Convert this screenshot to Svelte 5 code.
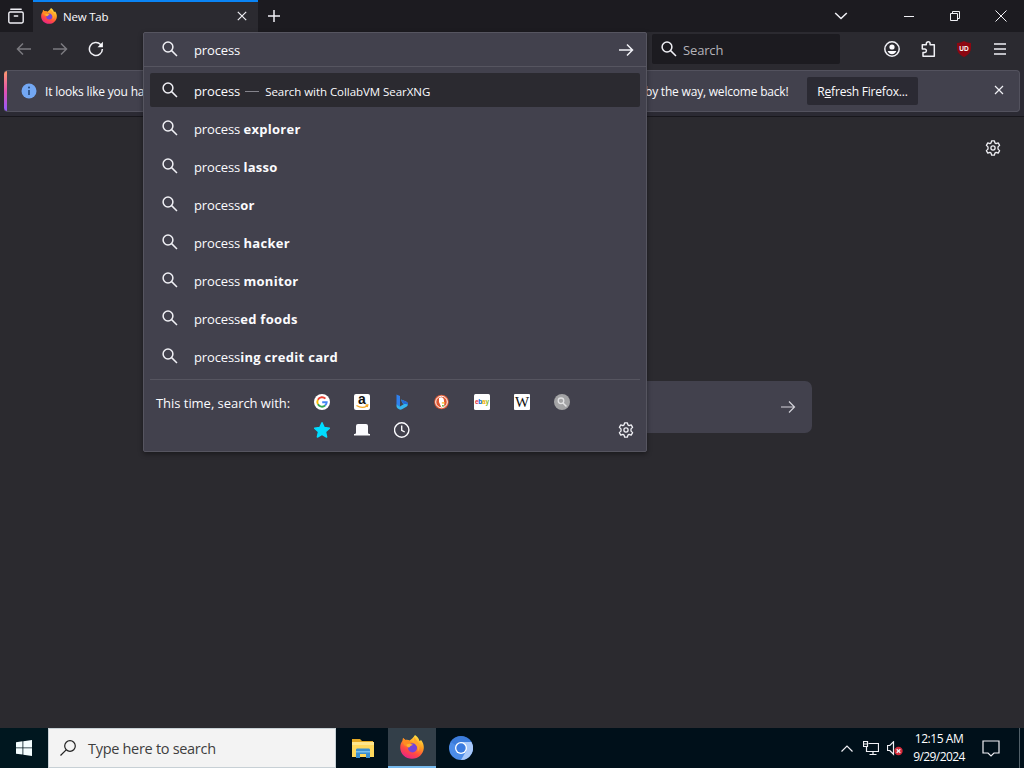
<script>
  const suggestions = [
    ['process ', 'explorer'],
    ['process ', 'lasso'],
    ['process', 'or'],
    ['process ', 'hacker'],
    ['process ', 'monitor'],
    ['process', 'ed foods'],
    ['process', 'ing credit card']
  ];
</script>

{#snippet lens()}
  <svg class="i16" viewBox="0 0 16 16"><circle cx="6" cy="6" r="4.9" /><path d="M9.6 9.6 15 15" /></svg>
{/snippet}

{#snippet gear()}
  <svg class="i16" viewBox="0 0 16 16">
    <path stroke-linejoin="round" stroke-width="1.3" d="M6.6 .8h2.8l.5 2.1 1.2.7 2.1-.7 1.4 2.5-1.6 1.5v2.2l1.6 1.5-1.4 2.5-2.1-.7-1.2.7-.5 2.1H6.6l-.5-2.1-1.2-.7-2.1.7-1.4-2.5L3 9.1V6.900L1.400 5.400 2.800 2.900l2.100.7 1.200-.7z" />
    <circle cx="8" cy="8" r="2.100" stroke-width="1.300" />
  </svg>
{/snippet}

{#snippet arrow()}
  <svg class="i16" viewBox="0 0 16 16"><path d="M1 8h13.500M9 2.500 14.500 8 9 13.500" /></svg>
{/snippet}

{#snippet firefox()}
  <svg class="fox" viewBox="0 0 24 24">
    <defs>
      <linearGradient id="fx" x1=".8" y1="0" x2=".3" y2="1">
        <stop offset="0" stop-color="#fff04a" /><stop offset=".4" stop-color="#ff9a1f" />
        <stop offset=".7" stop-color="#ff4a43" /><stop offset="1" stop-color="#e8208a" />
      </linearGradient>
    </defs>
    <path fill="url(#fx)" d="M15 0c3 2 4 4 4.500 6 1-.2 1.300-.8 1.400-1.300C23 7.500 24 10 23.800 13 23.400 19 18.500 23.800 12 23.800S.2 19 .2 12.500C.2 9 1.500 7 2.700 5.500L3 3l2.500 2c1.500-.3 3-.1 4 .5 2-1 4-3 5.500-5.500z" />
    <path fill="#ff8b22" d="M2.700 5.500 3 3l2.500 2c2 0 3.500.5 4.500 1.700l3 1-3 2-2 2c-3 0-5-2-5.300-6.200z" />
    <circle cx="12.500" cy="12.800" r="4.600" fill="#7543d8" />
    <path fill="#ffb22c" d="M6.500 9.500c3-1.500 5-.8 6.500.6-1.500.2-2.500.9-3.500 2.200-1.500.4-3-.8-3-2.800z" />
    <path fill="#ffa32b" d="M14.500 2c1.500 4 5 5 5 10 0 2-.7 3.500-1.800 4.600.6-3-.2-5.100-1.700-6.600-2-2-3-4-1.500-8z" />
  </svg>
{/snippet}

<div class="screen">
  <header class="tabs">
    <div class="view">
      <svg class="i16" viewBox="0 0 16 16"><path stroke-linecap="round" stroke-width="1.400" d="M2.800 1.200h10.400M2.200 4h11.600c.8 0 1.400.6 1.400 1.400v8.200c0 .8-.6 1.400-1.400 1.400H2.200c-.8 0-1.400-.6-1.400-1.400V5.400C.8 4.600 1.400 4 2.200 4zM6.300 8h3.400" /></svg>
    </div>
    <div class="tab">
      {@render firefox()}
      <span class="title">New Tab</span>
      <svg class="x" viewBox="0 0 10 10"><path d="m.8.8 8.400 8.400m0-8.400L.8 9.200" /></svg>
    </div>
    <svg class="plus" viewBox="0 0 12 12"><path d="M6 0v12M0 6h12" /></svg>
    <svg class="chev" viewBox="0 0 14 8"><path d="m1.200 1 5.800 5.500L12.800 1" /></svg>
    <svg class="wmin" viewBox="0 0 10 10"><path d="M0 5.500h10" /></svg>
    <svg class="wmax" viewBox="0 0 10 10"><path d="M.5 2.500h7v7h-7zM2.500 2.500v-2h7v7h-2" /></svg>
    <svg class="wclose" viewBox="0 0 12 12"><path d="m.5.5 11 11m0-11-11 11" /></svg>
  </header>

  <nav class="bar">
    <div class="navbtns">
      <svg class="i16 dim" viewBox="0 0 16 16"><path d="M15 8H1.500M7 2.500 1.500 8 7 13.500" /></svg>
      <svg class="i16 dim" viewBox="0 0 16 16"><path d="M1 8h13.500M9 2.500 14.500 8 9 13.500" /></svg>
      <svg class="i16" viewBox="0 0 16 16"><path d="M14.400 8A6.500 6.500 0 1 1 12.600 3.500l1.200 1.300" /><path d="M14.900.8v5.400H9.500z" fill="#fbfbfe" stroke="none" /></svg>
    </div>
    <div class="find">{@render lens()}<span>Search</span></div>
    <div class="tools">
      <svg class="i16" viewBox="0 0 16 16"><circle cx="8" cy="8" r="7.200" /><circle cx="8" cy="6" r="2.600" fill="#fbfbfe" stroke="none" /><path d="M3.600 10h8.800c-.7 2-2.300 3.200-4.400 3.200S4.300 12 3.600 10z" fill="#fbfbfe" stroke="none" /></svg>
      <svg class="i16" viewBox="0 0 16 16"><path stroke-linejoin="round" d="M6.300 3.800V2.700a1.900 1.900 0 0 1 3.800 0v1.100h4.200v11.400H3v-3.800h1.700a1.700 1.700 0 0 0 0-3.400H2.300V3.800z" /></svg>
      <svg class="i16" viewBox="0 0 16 16"><path fill="#8c0711" stroke="none" d="M8 0c2 1.300 4.500 2 7 2v5c0 4-2.500 7-7 9-4.500-2-7-5-7-9V2c2.500 0 5-.7 7-2z" /><text x="8" y="9.500" text-anchor="middle">UD</text></svg>
      <svg class="i16" viewBox="0 0 16 16"><path d="M2 3h12M2 8h12M2 13h12" /></svg>
    </div>
  </nav>

  <div class="noticewrap">
    <div class="notice">
      <svg class="info" viewBox="0 0 16 16"><circle cx="8" cy="8" r="7.500" fill="#73a7f3" /><path d="M8 7v5" stroke="#244777" stroke-width="1.600" /><circle cx="8" cy="4.500" r="1" fill="#244777" /></svg>
      <span class="msg">It looks like you ha</span>
      <span class="welcome">by the way, welcome back!</span>
      <button>R<u>e</u>fresh Firefox...</button>
      <svg class="nx" viewBox="0 0 10 10"><path d="m1 1 8 8m0-8L1 9" /></svg>
    </div>
  </div>

  <main>
    <div class="prefs">{@render gear()}</div>
    <div class="homesearch">{@render arrow()}</div>
  </main>

  <footer class="taskbar">
    <div class="start">
      <svg viewBox="0 0 16 16"><path fill="#f4feff" d="M0 2.200 6.500 1.300v6.200H0zM7.300 1.200 16 0v7.500H7.300zM0 8.300h6.500v6.300L0 13.700zM7.300 8.300H16V16l-8.700-1.200z" /></svg>
    </div>
    <div class="tsearch">
      <svg viewBox="0 0 16 16"><circle cx="10" cy="6" r="5.300" /><path d="M6.200 9.800.5 15.500" /></svg>
      <span>Type here to search</span>
    </div>
    <div class="app files">
      <svg class="folder" viewBox="0 0 22 19"><path fill="#e4a925" d="M0 0h8l2 2h11v5H0z" /><path fill="#ffd85c" d="M0 3h22v15H0z" /><path fill="#ffe68c" d="M0 3h22v3H0z" /><path fill="#3b8fd0" d="M4 11c0-1 .5-1.500 1.500-1.500h11c1 0 1.500.5 1.500 1.500v8h-4v-4H8v4H4z" /><path fill="#7ac0ee" d="M4 12h14v1.500H4z" /></svg>
    </div>
    <div class="app active">{@render firefox()}</div>
    <div class="app">
      <svg class="chromium" viewBox="0 0 24 24"><circle cx="12" cy="12" r="12" fill="#4c8ce8" /><path fill="#a8c8fa" d="M12 6h10.400A12 12 0 0 1 12 24l5.200-9z" /><path fill="#2f6fd0" d="M1.600 6A12 12 0 0 1 22.400 6H12a6 6 0 0 0-5.200 3z" opacity=".55" /><circle cx="12" cy="12" r="6" fill="#fff" /><circle cx="12" cy="12" r="4.700" fill="#3b7be0" /></svg>
    </div>
    <div class="tray">
      <svg class="up" viewBox="0 0 12 7"><path d="M.5 6.500 6 1l5.500 5.500" /></svg>
      <svg class="net" viewBox="0 0 16 14"><path d="M5.500 2.500h10v8H3.500V6M10 10.500v3M6.500 13.500h7M.5.500h4v5h-4zM.5 3h4" /></svg>
      <svg class="vol" viewBox="0 0 16 15"><path d="M.5 4.500h2.300L6.500.800v12.400L2.800 9.500H.5z" /><circle cx="11.500" cy="10" r="4.200" fill="#d62a3a" stroke="none" /><path d="m9.700 8.200 3.600 3.600m0-3.600-3.600 3.600" stroke-width="1.300" /></svg>
      <div class="clock"><span>12:15 AM</span><span class="date">9/29/2024</span></div>
      <svg class="action" viewBox="0 0 18 17"><path d="M1 1h16v12h-5l-3 3-3-3H1z" /></svg>
    </div>
    <div class="peek"></div>
  </footer>

  <section class="popup">
    <div class="input">{@render lens()}<span class="q">process</span>{@render arrow()}</div>
    <div class="list">
      <div class="row sel">{@render lens()}<span class="q">process</span><span class="dash"></span><span class="act">Search with CollabVM SearXNG</span></div>
      {#each suggestions as [a, b]}
        <div class="row">{@render lens()}<span class="q">{a}<b>{b}</b></span></div>
      {/each}
    </div>
    <div class="oneoff">
      <span class="label">This time, search with:</span>
      <div class="engines">
        <svg viewBox="0 0 16 16"><circle cx="8" cy="8" r="8" fill="#fff" /><g fill="none" stroke-width="1.900"><path stroke="#ea4335" d="M3.900 5.700A4.700 4.700 0 0 1 11.400 4.700" /><path stroke="#fbbc05" d="M3.900 5.700a4.700 4.700 0 0 0 0 4.600" /><path stroke="#34a853" d="M3.900 10.300a4.700 4.700 0 0 0 7.200 1.200" /><path stroke="#4285f4" d="M11.100 11.500A4.700 4.700 0 0 0 12.700 8.200H8.200" /></g></svg>
        <svg viewBox="0 0 16 16"><rect width="16" height="16" rx="2" fill="#fff" /><text x="8" y="10" text-anchor="middle" class="am">a</text><path d="M2.500 11.500c3.500 2.300 7.500 2.300 10.500.5M11.500 11h2.300l-.6 2" fill="none" stroke="#f5a623" stroke-width="1.300" /></svg>
        <svg viewBox="0 0 16 16"><path fill="#2f80ed" d="M2.500.500 6 2v10.500L2.500 11z" /><path fill="#35b5ef" d="M2.500 10.500 6 12.500 10 10c-1.500-1-2-1-2.800-4.600L12 7.500c2.500 1.200 2.600 3.500.8 5L8 15.300c-1 .6-2 .6-3 0l-1.500-1c-.7-.5-1-1.300-1-2z" /><path fill="#2468d6" d="M7.200 5.400 12 7.500c1.700.8 2.200 2.100 1.900 3.400-.8-1-2-1.100-3.900-.9l-1.700-1.200z" /></svg>
        <svg viewBox="0 0 16 16"><circle cx="7.500" cy="8" r="7.300" fill="#de5833" /><circle cx="7.500" cy="8" r="5.800" fill="#de5833" stroke="#fff" stroke-width="1" /><path fill="#fff" d="M5 4c2.500-1.500 5-.3 5 3l.3 5.500-3 .8L5 8z" /><path fill="#fdbb2f" d="M7.800 8.200h3v1.400h-3z" /><path fill="#65bc46" d="M8 11h1.800v1.500H8z" /></svg>
        <svg viewBox="0 0 16 16"><rect width="16" height="16" rx="1.500" fill="#fff" /><text x="1" y="10" class="eb" textLength="14"><tspan fill="#e53238">e</tspan><tspan fill="#0064d2">b</tspan><tspan fill="#f5af02">a</tspan><tspan fill="#86b817">y</tspan></text></svg>
        <svg viewBox="0 0 16 16"><rect width="16" height="16" rx="1" fill="#fff" /><text x="8" y="12.500" text-anchor="middle" class="wk">W</text></svg>
        <svg viewBox="0 0 16 16"><circle cx="8" cy="8" r="8" fill="#a3a3a5" /><circle cx="7" cy="6.800" r="2.800" fill="none" stroke="#e1e1e3" stroke-width="1.300" /><path d="m9 9 3.500 3.500" stroke="#e1e1e3" stroke-width="1.500" /></svg>
        <svg viewBox="0 0 16 16"><path fill="#00ddff" stroke="#00ddff" stroke-linejoin="round" d="m8 .8 2.200 4.800 5.200.6-3.900 3.600 1.100 5.200L8 12.400 3.400 15l1.100-5.200L.6 6.200l5.200-.6z" /></svg>
        <svg viewBox="0 0 16 16"><path fill="#fbfbfe" d="M2 10.500V4A2 2 0 0 1 4 2h8a2 2 0 0 1 2 2v6.500c0 1 .7 1.500 2 1.500v1.500H0V12c1.300 0 2-.5 2-1.500z" /></svg>
        <svg viewBox="0 0 16 16"><circle cx="7.700" cy="8" r="7.200" fill="none" stroke="#fbfbfe" stroke-width="1.400" /><path d="M7.700 3.500V8.300l3 1.700" fill="none" stroke="#fbfbfe" stroke-width="1.400" /></svg>
      </div>
      <div class="set">{@render gear()}</div>
    </div>
  </section>
</div>

<style>
  :global(body) { background: #2b2a33; }
  * { box-sizing: border-box; }
  svg { display: block; flex: none; fill: none; stroke: #f0f0f5; stroke-width: 1.500; }
  .i16 { width: 16px; height: 16px; }
  .screen { position: relative; width: 1024px; height: 768px; overflow: hidden; display: flex; flex-direction: column; background: #2b2a2f; color: #fbfbfe; font-family: "Open Sans", "Noto Sans", sans-serif; font-size: 11.500px; white-space: nowrap; }
  .fox { stroke: none; width: 16px; height: 16px; }

  .tabs { height: 32px; flex: none; display: flex; align-items: center; background: #1c1b20; }
  .view { width: 33px; padding-left: 8px; }
  .tab { width: 225px; height: 32px; background: #2b2a30; border-top: 2px solid #0a84f5; display: flex; align-items: center; padding: 0 11px 2px 8px; }
  .title { margin-left: 6px; flex: 1; letter-spacing: -.2px; }
  .x { width: 10px; height: 10px; stroke-width: 1.200; }
  .plus { width: 12px; height: 12px; margin-left: 10px; }
  .chev { width: 14px; height: 8px; margin-left: 554px; }
  .wmin { width: 10px; height: 10px; margin-left: 56px; stroke-width: 1; }
  .wmax { width: 10px; height: 10px; margin-left: 36px; stroke-width: 1; }
  .wclose { width: 12px; height: 12px; margin-left: 35px; stroke-width: 1; }

  .bar { height: 38px; flex: none; display: flex; align-items: center; background: #2b2a30; padding: 0 16px 4px; }
  .navbtns { display: flex; gap: 20px; width: 636px; }
  .dim { opacity: .4; }
  .find { width: 188px; height: 30px; background: #1c1b20; border-radius: 2px; display: flex; align-items: center; padding-left: 9px; font-size: 13px; color: #b4b3b9; }
  .find span { margin: 1px 0 0 6px; letter-spacing: -.15px; }
  .tools { display: flex; gap: 20px; margin-left: 44px; }
  .tools text { font: bold 6.500px "Liberation Sans", sans-serif; fill: #fff; stroke: none; }

  .noticewrap { height: 47px; flex: none; padding: 0 4px 4px; background: #2b2a33; border-bottom: 1px solid #18171c; }
  .notice { height: 42px; display: flex; align-items: center; background: linear-gradient(#ff9a6c, #e351b0, #9059ff) left / 3px 100% no-repeat #42414d; border: 1px solid #53525e; border-left: 0; border-radius: 4px; padding-left: 17px; }
  .info { width: 16px; height: 16px; stroke: none; }
  .msg { width: 600px; margin-left: 8px; font-size: 12px; letter-spacing: -.2px; }
  .welcome { width: 162px; font-size: 12px; letter-spacing: -.2px; }
  button { width: 111px; height: 28px; padding: 0; border: 0; border-radius: 2px; background: #2b2a33; color: #fbfbfe; font: 500 12px "Open Sans", sans-serif; letter-spacing: -.2px; }
  .nx { width: 10px; height: 10px; margin: -2px 0 0 76px; stroke-width: 1.200; }

  main { flex: 1; display: flex; flex-direction: column; background: #2b2a2f; }
  .prefs { align-self: flex-end; margin: 23px 23px 0 0; }
  .homesearch { align-self: center; width: 600px; height: 52px; margin-top: 225px; background: #42414d; border-radius: 7px; display: flex; align-items: center; justify-content: flex-end; padding-right: 16px; }
  .homesearch :global(svg) { stroke: #d3d2da; stroke-width: 1.200; }

  .taskbar { height: 40px; flex: none; display: flex; background: #00101a; color: #fff; }
  .start { width: 48px; display: grid; place-items: center; background: #00171f; }
  .start svg { width: 16px; height: 16px; stroke: none; }
  .tsearch { width: 288px; background: #f3f3f3; border: 1px solid #c7d0d5; display: flex; align-items: center; padding-left: 11px; font-size: 14.500px; color: #3e3e3e; }
  .tsearch svg { width: 16px; height: 16px; stroke: #222; stroke-width: 1.200; }
  .tsearch span { margin-left: 12px; letter-spacing: -.3px; }
  .app { width: 49px; display: grid; place-items: center; }
  .app svg { width: 24px; height: 24px; stroke: none; }
  .app .folder { width: 22px; height: 19px; margin-left: 2px; }
  .files { width: 52px; }
  .active { width: 48px; background: #333f49; border-bottom: 2px solid #76b9ed; }
  .tray { margin-left: auto; display: flex; align-items: center; }
  .tray svg { stroke-width: 1.200; }
  .up { width: 12px; height: 7px; }
  .net { width: 16px; height: 14px; margin-left: 10px; }
  .vol { width: 16px; height: 15px; margin-left: 8px; }
  .clock { width: 74px; display: flex; flex-direction: column; align-items: center; font-size: 12px; line-height: 18px; letter-spacing: -.45px; margin-left: -1px; }
  .date { letter-spacing: -.6px; }
  .action { width: 18px; height: 17px; margin-left: 6px; }
  .peek { width: 5px; margin-left: 19px; border-left: 1px solid #526069; }

  .popup { position: absolute; left: 143px; top: 32px; width: 504px; height: 420px; background: #42414d; border: 1px solid #565560; border-radius: 2px; display: flex; flex-direction: column; font-size: 13px; box-shadow: 0 2px 5px #0006; }
  .input { height: 34px; display: flex; align-items: center; padding: 0 12px 0 18px; border-bottom: 1px solid #565560; }
  .input :global(svg:first-child) { margin-top: -1px; }
  .q { letter-spacing: -.12px; white-space: pre; margin-left: 16px; }
  .input .q { flex: 1; }
  b { font-weight: 700; letter-spacing: .3px; }
  .list { padding: 6px 6px 0; height: 312px; display: flex; flex-direction: column; gap: 4px; }
  .row { height: 34px; flex: none; display: flex; align-items: center; padding: 0 0 0 12px; }
  .row .q { margin-top: 2px; }
  .sel { background: #2b2a30; border-radius: 2px; }
  .dash { width: 14px; height: 1px; margin: 3px 6px 0 5px; background: #85848c; }
  .act { margin-top: 2px; font-size: 11.500px; letter-spacing: -.05px; }
  .oneoff { margin: 0 6px; border-top: 1px solid #565560; flex: 1; display: flex; align-items: flex-start; }
  .label { margin: 14px 0 0 6px; width: 158px; letter-spacing: -.04px; }
  .engines { width: 256px; margin-top: 14px; display: grid; grid-template-columns: repeat(7, 16px); gap: 12px 24px; }
  .engines svg { width: 16px; height: 16px; stroke: none; }
  .am { font: bold 14px "Liberation Sans", sans-serif; fill: #111; }
  .eb { font: bold 6.500px "Liberation Sans", sans-serif; }
  .wk { font: 15px "Liberation Serif", serif; fill: #111; }
  .set { margin: 42px 0 0 48px; }
</style>
